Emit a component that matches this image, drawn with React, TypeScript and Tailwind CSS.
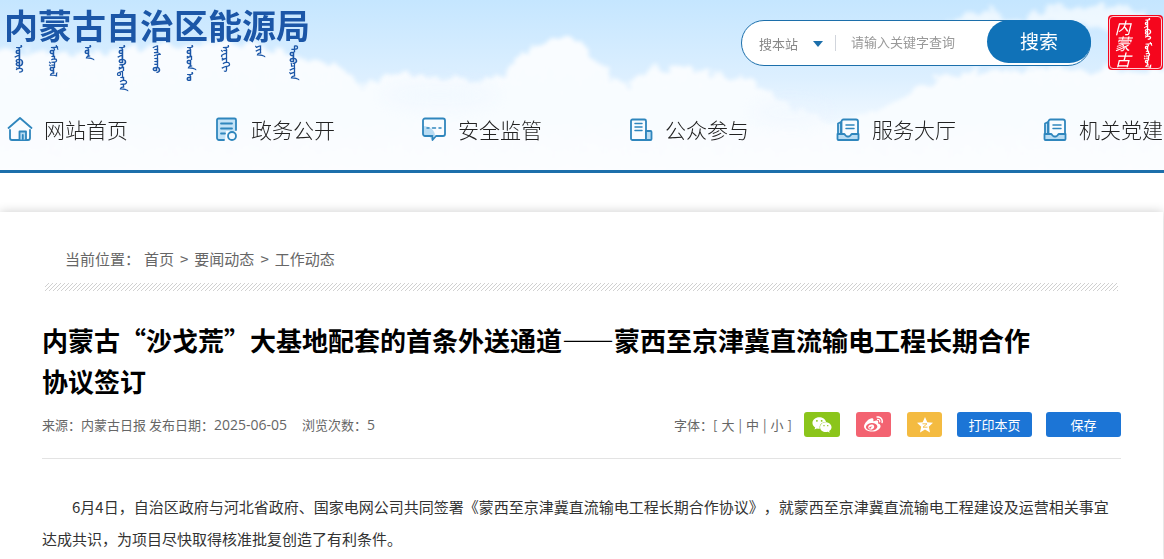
import type { ReactNode } from 'react';
import { FaWeibo, FaWeixin } from 'react-icons/fa';

const mongolianName = [
  'ᠥᠪᠥᠷ',
  'ᠮᠣᠩᠭᠣᠯ',
  'ᠤᠨ',
  'ᠥᠪᠡᠷᠲᠡᠭᠡᠨ',
  'ᠵᠠᠰᠠᠬᠤ',
  'ᠣᠷᠣᠨ ᠤ',
  'ᠡᠨᠧᠷᠭᠢ',
  'ᠶᠢᠨ',
  'ᠲᠣᠪᠴᠢᠶᠠ',
];

function NavIcon({ children }: { children: ReactNode }) {
  return (
    <svg
      className="w-[26px] h-[26px] shrink-0"
      viewBox="0 0 26 26"
      fill="none"
      stroke="#2f86bd"
      strokeWidth="1.8"
      strokeLinejoin="round"
      strokeLinecap="round"
      aria-hidden="true"
    >
      {children}
    </svg>
  );
}

const HomeIcon = () => (
  <NavIcon>
    <path d="M1.5 12 13 2l11.500 10" />
    <path d="M3 14v8a2 2 0 0 0 2 2h16a2 2 0 0 0 2-2v-8" />
    <path d="M12.500 23.500V15.500h6.500v8" fill="#b9dcf3" />
    <path d="M15.800 19v4" />
  </NavIcon>
);

const FileIcon = () => (
  <NavIcon>
    <path d="M11 24H5a2 2 0 0 1-2-2V4a1.500 1.500 0 0 1 1.500-1.500h16A1.500 1.500 0 0 1 22 4v11H12z" fill="#c4e3f7" stroke="none" />
    <path d="M10 24H5a2 2 0 0 1-2-2V4a1.500 1.500 0 0 1 1.500-1.500h16A1.500 1.500 0 0 1 22 4v10" />
    <path d="M7 7.500h11M7 12.500h11M7 17.500h4" />
    <circle cx="18" cy="20" r="4" fill="#f4faff" />
  </NavIcon>
);

const ChatIcon = () => (
  <NavIcon>
    <path d="M2 10c7 0 12 4 12 10h-3v4l-3-4H4a2 2 0 0 1-2-2z" fill="#b9dcf3" stroke="none" />
    <path d="M4 2.500h18a2 2 0 0 1 2 2V18a2 2 0 0 1-2 2h-7l-3.500 4v-4H4a2 2 0 0 1-2-2V4.500a2 2 0 0 1 2-2z" />
    <path d="M6 12h2M11.500 12h3M18 12h2" strokeWidth="1.5" />
  </NavIcon>
);

const BuildingIcon = () => (
  <NavIcon>
    <path d="M3 5a1.500 1.500 0 0 1 1.500-1.500h12A1.500 1.500 0 0 1 18 5v19H4.500A1.500 1.500 0 0 1 3 22.500z" />
    <path d="M18 15h4.500a1 1 0 0 1 1 1v7a1 1 0 0 1-1 1H18z" fill="#b9dcf3" />
    <path d="M7 7.500h7M7 11h7M7 14.500h7" strokeWidth="1.500" />
  </NavIcon>
);

const TrayIcon = () => (
  <NavIcon>
    <path d="M3 18V7.500L6 6V18z" fill="#c4e3f7" />
    <path d="M6.500 18V5.500a2 2 0 0 1 2-2H21a2 2 0 0 1 2 2V18" />
    <path d="M2.500 18H9c1 0 1.500 2.500 3 2.500h2c1.500 0 2-2.500 3-2.500h6.500v5a1 1 0 0 1-1 1h-19a1 1 0 0 1-1-1z" fill="#b9dcf3" />
    <path d="M11 9h8M11 12.500h8" strokeWidth="1.500" />
  </NavIcon>
);

const navItems = [
  { name: '网站首页', icon: HomeIcon },
  { name: '政务公开', icon: FileIcon },
  { name: '安全监管', icon: ChatIcon },
  { name: '公众参与', icon: BuildingIcon },
  { name: '服务大厅', icon: TrayIcon },
  { name: '机关党建', icon: TrayIcon },
];

const crumbs = ['首页', '要闻动态', '工作动态'];

function Sky() {
  return (
    <svg
      className="absolute inset-0 w-full h-full -z-10"
      viewBox="0 0 1164 170"
      preserveAspectRatio="none"
      aria-hidden="true"
    >
      <defs>
        <linearGradient id="sky" x1="0" y1="0" x2="0" y2="1">
          <stop offset="0" stopColor="#c5e6ff" />
          <stop offset="0.45" stopColor="#dcefff" />
          <stop offset="0.75" stopColor="#f2f9ff" />
          <stop offset="1" stopColor="#fdfeff" />
        </linearGradient>
        <linearGradient id="cloud" x1="0" y1="0" x2="0" y2="1">
          <stop offset="0" stopColor="#f9fcff" />
          <stop offset="0.5" stopColor="#f8fcff" />
          <stop offset="1" stopColor="#fefeff" />
        </linearGradient>
        <filter id="fluff" x="-5%" y="-20%" width="110%" height="140%">
          <feTurbulence type="fractalNoise" baseFrequency="0.08" numOctaves="5" seed="4" result="noise" />
          <feDisplacementMap in="SourceGraphic" in2="noise" scale="20" xChannelSelector="R" yChannelSelector="G" />
          <feGaussianBlur stdDeviation="2" />
        </filter>
        <filter id="haze" x="-20%" y="-60%" width="140%" height="220%">
          <feGaussianBlur stdDeviation="9" />
        </filter>
      </defs>
      <rect width="1164" height="170" fill="url(#sky)" />
      <g filter="url(#fluff)">
        <path
          d="M-20 50 60 54l80-6 60-6 50 2 50 12 25 8 22 6 14 18 20-14 20 0 50 6 45 0 22-20 12-12 14-8 24-2 16 6 10 14 14 20 20 6 25-14 30-4 30 10 25 2 25 12 24 12 40 20 50-10 30-16 30-20 60-6 180 0 40 0v130H-20z"
          fill="url(#cloud)"
        />
        <path d="M935 30 960 18l30-8 30 10 30-12 60-4 40 12-30 18-50-12-50 8-40-4z" fill="#f6fbff" opacity="0.8" />
      </g>
      <g filter="url(#haze)" fill="#e9f4ff" opacity="0.4">
        <ellipse cx="440" cy="95" rx="60" ry="12" />
        <ellipse cx="790" cy="112" rx="40" ry="10" />
      </g>
    </svg>
  );
}

function Seal() {
  return (
    <div className="w-[55px] h-[55px] shrink-0 rounded-sm bg-[#f5061d] p-px">
      <div className="h-full rounded-sm border border-white/80 flex items-center justify-around text-white">
        <span className="text-base leading-4 w-4 italic">内蒙古</span>
        <span className="[writing-mode:vertical-lr] text-[8px] leading-4 whitespace-nowrap font-bold" lang="mn">
          ᠥᠪᠥᠷ ᠮᠣᠩᠭᠣᠯ
        </span>
      </div>
    </div>
  );
}

function Header() {
  return (
    <header className="relative isolate border-b-3 border-[#1c6fab] h-[173px] flex flex-col justify-between">
      <Sky />
      <div className="flex items-start justify-between pl-1">
        <div className="text-[#1b56a7]">
          <h1 className="text-[34px] leading-[40px] pt-[5px] font-bold whitespace-nowrap">内蒙古自治区能源局</h1>
          <div className="flex justify-between h-11 pl-2 pr-2" lang="mn">
            {mongolianName.map((word) => (
              <span key={word} className="[writing-mode:vertical-lr] text-[10px] leading-4 font-semibold whitespace-nowrap">
                {word}
              </span>
            ))}
          </div>
        </div>

        <div className="flex items-start gap-[17px] pt-[15px] pr-px">
          <form className="mt-[5px] flex items-start w-[350px] h-[46px] rounded-full border border-[#1c6fab] bg-white">
            <div className="relative ml-[17px] mt-[13px] flex items-center">
              <select
                aria-label="搜索范围"
                className="w-[68px] h-5 appearance-none bg-transparent text-[13px] leading-5 text-[#888] outline-none"
              >
                <option>搜本站</option>
              </select>
              <svg className="absolute right-1 w-2.5 h-1.5 pointer-events-none" viewBox="0 0 10 6" fill="#1c6fab" aria-hidden="true">
                <path d="M0 0h10L5 6z" />
              </svg>
            </div>
            <div className="ml-2 mt-3.5 w-px h-4 bg-gray-300" />
            <input
              type="text"
              aria-label="关键字"
              placeholder="请输入关键字查询"
              className="ml-[15px] mt-[11px] h-5 min-w-0 flex-1 bg-transparent text-[13px] leading-5 text-gray-700 placeholder:text-[#999] outline-none"
            />
            <button type="button" className="-mt-px -mr-px w-[104px] h-[43px] shrink-0 rounded-full bg-[#1072b8] text-white text-[19px]">
              搜索
            </button>
          </form>
          <Seal />
        </div>
      </div>

      <nav className="flex justify-between pl-[7px] pr-px pb-[26px]">
        {navItems.map((item) => (
          <a key={item.name} href="#" className="flex items-center gap-[11px] text-[21px] leading-[30px] font-light text-[#222] whitespace-nowrap">
            <item.icon />
            {item.name}
          </a>
        ))}
      </nav>
    </header>
  );
}

export default function App() {
  return (
    <div className="font-['Noto_Sans_CJK_SC',sans-serif] [text-spacing-trim:space-all] bg-white overflow-hidden" lang="zh-CN">
      <Header />

      <main className="mt-[39px] mr-px px-[42px] pb-1 bg-white shadow-[0_0_10px_rgba(0,0,0,0.2)]">
        {/* Breadcrumb */}
        <nav className="pt-[35px] pl-[23px] flex text-[15px] leading-6 text-[#666]" aria-label="当前位置">
          <span className="mr-1">当前位置：</span>
          {crumbs.map((name, i) => (
            <span key={name} className="flex">
              {i > 0 && <span className="mx-1.5">&gt;</span>}
              <a href="#">{name}</a>
            </span>
          ))}
        </nav>
        <svg className="block mt-3 mx-[3px] w-[calc(100%-6px)] h-2" aria-hidden="true">
          <defs>
            <pattern id="hatch" width="4" height="4" patternUnits="userSpaceOnUse">
              <path d="M-1 5 5-1M-1 1 1-1M3 5 5 3" stroke="#d0d0d0" strokeWidth="1" />
            </pattern>
          </defs>
          <rect width="100%" height="8" fill="url(#hatch)" />
        </svg>

        <article>
          <h2 className="mt-7 text-[26px] leading-[41px] font-bold text-black pr-[70px]">
            内蒙古“沙戈荒”大基地配套的首条外送通道——蒙西至京津冀直流输电工程长期合作协议签订
          </h2>

          <div className="mt-[11px] pb-[21px] flex items-center justify-between border-b border-[#e3e3e3] text-[13px] text-[#666]">
            <p className="flex items-center gap-[15px] leading-5">
              <span>
                来源：内蒙古日报 发布日期：<span className="font-['Open_Sans',sans-serif] text-sm">2025-06-05</span>
              </span>
              <span>
                浏览次数：<span className="font-['Open_Sans',sans-serif] text-sm">5</span>
              </span>
            </p>
            <div className="flex items-center">
              <div className="flex items-center gap-1">
                <span>字体：[</span>
                <button type="button">大</button>
                <span>|</span>
                <button type="button">中</button>
                <span>|</span>
                <button type="button">小</button>
                <span>]</span>
              </div>
              <button type="button" aria-label="微信" className="ml-3 w-9 h-[25px] rounded-[3px] bg-[#8bc51b] text-white flex items-center justify-center">
                <FaWeixin size={20} />
              </button>
              <button type="button" aria-label="微博" className="ml-4 w-[35px] h-[25px] rounded-[3px] bg-[#f36371] text-white flex items-center justify-center">
                <FaWeibo size={19} />
              </button>
              <button type="button" aria-label="QQ空间" className="ml-4 w-[35px] h-[25px] rounded-[3px] bg-[#f4bb41] flex items-center justify-center">
                <svg className="w-4 h-4" viewBox="0 0 16 16" aria-hidden="true">
                  <path d="m8 0 2.300 5.200 5.700.600-4.200 3.900 1.200 5.800L8 12.600l-5 2.900 1.200-5.800L0 5.800l5.700-.6z" fill="#fff" />
                  <path d="M5.500 6.800h4.500l-4 3.400h4.500" fill="none" stroke="#f4bb41" strokeWidth="0.900" />
                </svg>
              </button>
              <button type="button" className="ml-[15px] w-[75px] h-[25px] rounded-[3px] bg-[#1c75d6] text-white">
                打印本页
              </button>
              <button type="button" className="ml-3.5 w-[75px] h-[25px] rounded-[3px] bg-[#1c75d6] text-white">
                保存
              </button>
            </div>
          </div>

          <p className="mt-8 indent-[30px] text-[15px] leading-8 text-[#333]">
            6月4日，自治区政府与河北省政府、国家电网公司共同签署《蒙西至京津冀直流输电工程长期合作协议》，就蒙西至京津冀直流输电工程建设及运营相关事宜达成共识，为项目尽快取得核准批复创造了有利条件。
          </p>
        </article>
      </main>
    </div>
  );
}
